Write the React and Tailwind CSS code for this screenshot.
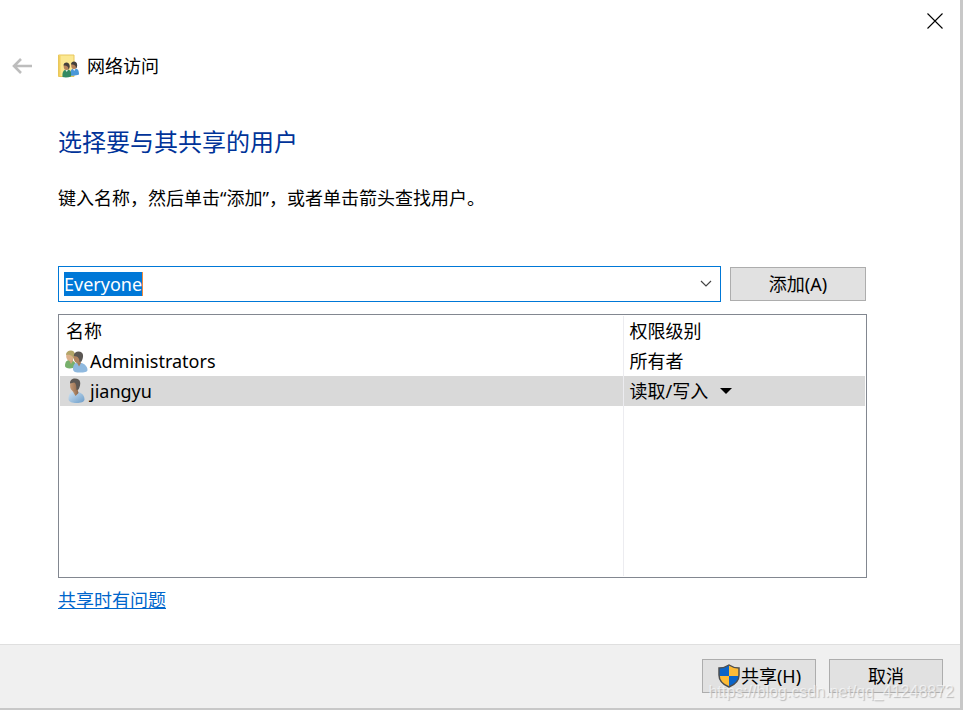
import React, { useEffect, useRef, useState } from 'react';

const CloseIcon = () => (
  <svg width="16" height="16" viewBox="0 0 16 16" fill="none" stroke="#000" strokeWidth="1.1">
    <path d="M0.5 0.5 15.5 15.5M15.5 0.5 0.5 15.5" />
  </svg>
);

const BackIcon = () => (
  <svg width="20" height="16" viewBox="0 0 20 16" fill="none" stroke="#bdbdbd" strokeWidth="2.6">
    <path d="M20 8H2M9 1 2 8l7 7" />
  </svg>
);

const ShareFolderIcon = () => (
  <svg width="22" height="24" viewBox="0 0 22 24">
    <path d="M.5 1h15.500v21.500H.5z" fill="#fbe892" stroke="#e8c75c" />
    <path d="M1 1.500h1.500v20.500H1z" fill="#f3cf5f" />
    <path d="M12.500 21.500c-.5-5 .5-7 4-7s4.500 2 4.500 6c-2.500 1-5.500 1.500-8.500 1z" fill="#4a98d8" />
    <path d="m14.500 14.500 1.800 2.500 1.500-2.500z" fill="#e8eef4" />
    <ellipse cx="16" cy="11.500" rx="2.800" ry="3.500" fill="#b5835c" />
    <path d="M13 10.500c0-4 6.500-4 6.200 1-.2 1.500-.7 2.500-1.200 3 0-2-.5-4-5-4z" fill="#44403c" />
    <path d="M4.500 23c-.5-5 1-7.500 4.500-7.500s4.500 2.500 4 7c-2.500 1-6 1.200-8.500.5z" fill="#338a62" />
    <path d="m7 15.500 1.800 2.500 1.500-2.500z" fill="#dcebe4" />
    <ellipse cx="8.500" cy="12.500" rx="2.800" ry="3.500" fill="#b5835c" />
    <path d="M5.500 11.500c0-4 6.500-4 6.200 1-.2 1.500-.7 2.500-1.200 3 0-2-.5-4-5-4z" fill="#44403c" />
  </svg>
);

const PersonIcon = () => (
  <svg width="24" height="26" viewBox="0 0 24 26">
    <defs>
      <linearGradient id="shirt" x1="0" y1="0" x2="1" y2="1">
        <stop offset="0" stopColor="#d3e5f4" />
        <stop offset="1" stopColor="#6a9cc9" />
      </linearGradient>
      <linearGradient id="skin" x1="0" y1="0" x2="1" y2="0">
        <stop offset="0" stopColor="#c39a78" />
        <stop offset="1" stopColor="#8a6446" />
      </linearGradient>
    </defs>
    <path d="M4.500 21c0-5 2-7.500 6-7.500 6 0 10 3 10 8 0 2.500-4 3.500-8 3.500s-8-1-8-4z" fill="url(#shirt)" />
    <path d="m8.500 13 3 5 3-3-1-4H9z" fill="url(#skin)" />
    <ellipse cx="10.500" cy="7.500" rx="4.500" ry="6" fill="url(#skin)" />
    <path d="M6 5.500C6 2 8 .5 11 .5c6 0 6.500 5.500 3.500 11l-2 .5C12.500 8 12 5 10 4.500z" fill="#5b5753" />
  </svg>
);

const GroupIcon = () => (
  <svg width="24" height="24" viewBox="0 0 24 24">
    <path d="M1 17c0-4.500 2-6 5-6s6 2 6 7c-4 2-11 2-11-1z" fill="#78b06c" />
    <path d="m5 11 2 4 2-3V9H5z" fill="#cfa27a" />
    <ellipse cx="6" cy="7" rx="3.800" ry="5" fill="#dbb08a" />
    <path d="M2 6C2 3 4 1.500 7 1.500c4 0 5 4.500 3 9C9 7.500 7 5 2 6z" fill="#b3a568" />
    <path d="M9 20c0-4.500 2-6.500 5.500-6.500 4.500 0 9 3 9 7.500 0 2-3.500 2.500-7.500 2.500s-7-.5-7-3.500z" fill="#8fb9df" />
    <path d="m12.500 13 2.500 4.500 2-3.500-1-3h-3z" fill="#a87b58" />
    <ellipse cx="13.500" cy="8.500" rx="3.800" ry="5.500" fill="#b08460" />
    <path d="M9.800 7C9.800 4 12 2.500 14.500 2.500c5.500 0 5.500 5.500 3 10l-2 .5c0-3-1-6-5.700-6z" fill="#5b5753" />
  </svg>
);

const ShieldIcon = () => (
  <svg width="24" height="24" viewBox="0 0 24 24">
    <defs>
      <clipPath id="shield">
        <path d="M12 1c3 2 6 3 10 3v7c0 6-5 10-10 12C7 21 2 17 2 11V4c4 0 7-1 10-3z" />
      </clipPath>
    </defs>
    <g clipPath="url(#shield)">
      <path d="M0 0h12v12H0zM12 12h12v12H12z" fill="#0b64c8" />
      <path d="M12 0h12v12H12zM0 12h12v12H0z" fill="#fdbb36" />
    </g>
    <path d="M12 1c3 2 6 3 10 3v7c0 6-5 10-10 12C7 21 2 17 2 11V4c4 0 7-1 10-3z" fill="none" stroke="#4d4d4d" strokeWidth="1.500" />
  </svg>
);

const users = [
  { name: 'Administrators', level: '所有者', icon: <GroupIcon /> },
  { name: 'jiangyu', level: '读取/写入', icon: <PersonIcon />, editable: true },
];

const App = () => {
  const [name, setName] = useState('Everyone');
  const [selected, setSelected] = useState('jiangyu');
  const inputRef = useRef(null);

  useEffect(() => {
    inputRef.current.focus();
    inputRef.current.select();
  }, []);

  return (
    <div className="relative flex min-h-screen flex-col border-r-3 border-b-2 border-[#c8c8c8] bg-white font-['Noto_Sans','Noto_Sans_CJK_SC',sans-serif] text-lg/6 text-black">
      <div className="flex justify-end px-4 pt-3">
        <button type="button" aria-label="关闭" className="p-px">
          <CloseIcon />
        </button>
      </div>

      <header className="flex items-center px-3 pt-6">
        <button type="button" aria-label="返回" className="mr-[26px]">
          <BackIcon />
        </button>
        <ShareFolderIcon />
        <span className="ml-[7px]">网络访问</span>
      </header>

      <main className="mr-[93px] ml-[58px] flex flex-1 flex-col pt-12">
        <h1 className="text-2xl/8 text-[#003399]">选择要与其共享的用户</h1>
        <p className="mt-7">键入名称，然后单击“添加”，或者单击箭头查找用户。</p>

        <div className="mt-14 flex items-center gap-[9px] pr-px">
          <div className="flex h-9 flex-1 items-center border border-[#0078d7] pr-2 pl-[5px]">
            <input
              ref={inputRef}
              type="text"
              aria-label="用户名称"
              value={name}
              onChange={(e) => setName(e.target.value)}
              className="field-sizing-content h-6 border-r border-[#f08a3c] outline-none selection:bg-[#0078d7] selection:text-white"
            />
            <button type="button" aria-label="显示用户列表" className="ml-auto">
              <svg width="12" height="8" viewBox="0 0 12 8" fill="none" stroke="#444" strokeWidth="1.2">
                <path d="m1 1 5 5 5-5" />
              </svg>
            </button>
          </div>
          <button type="button" className="h-[34px] w-34 border border-[#adadad] bg-[#e1e1e1]">
            添加(A)
          </button>
        </div>

        <div className="mt-3 flex min-h-40 flex-1 border border-[#828790] p-px">
          <table className="w-full table-fixed text-left">
            <thead>
              <tr className="h-[30px]">
                <th className="border-r border-[#ececf0] px-1.5 font-normal">名称</th>
                <th className="w-[242px] px-1.5 font-normal">权限级别</th>
              </tr>
            </thead>
            <tbody>
              {users.map((user) => (
                <tr
                  key={user.name}
                  onClick={() => setSelected(user.name)}
                  className={`h-[30px] ${user.name === selected ? 'bg-[#d9d9d9]' : ''}`}
                >
                  <td className="border-r border-[#ececf0] px-1">
                    <div className="flex items-center gap-0.5">
                      {user.icon}
                      {user.name}
                    </div>
                  </td>
                  <td className="px-1.5">
                    <div className="flex items-center gap-3">
                      {user.level}
                      {user.editable && (
                        <svg width="12" height="6" viewBox="0 0 12 6">
                          <path d="M0 0h12L6 6z" />
                        </svg>
                      )}
                    </div>
                  </td>
                </tr>
              ))}
              <tr>
                <td className="border-r border-[#ececf0]"></td>
                <td></td>
              </tr>
            </tbody>
          </table>
        </div>

        <a href="#help" className="mt-2.5 self-start text-[#0066cc] underline">
          共享时有问题
        </a>
      </main>

      <footer className="mt-8 flex justify-end gap-[13px] border-t border-[#dfdfdf] bg-[#f0f0f0] px-[17px] pt-3.5 pb-[15px]">
        <button type="button" className="flex h-[34px] w-[114px] items-center justify-center border border-[#adadad] bg-[#e1e1e1]">
          <ShieldIcon />
          共享(H)
        </button>
        <button type="button" className="h-[34px] w-[114px] border border-[#adadad] bg-[#e1e1e1]">
          取消
        </button>
      </footer>

      <span className="pointer-events-none absolute right-1.5 bottom-1.5 font-['Liberation_Sans',sans-serif] text-base/5 text-white/60 [text-shadow:1px_1px_1px_#bbbbbb]">
        https://blog.csdn.net/qq_41248872
      </span>
    </div>
  );
};

export default App;
